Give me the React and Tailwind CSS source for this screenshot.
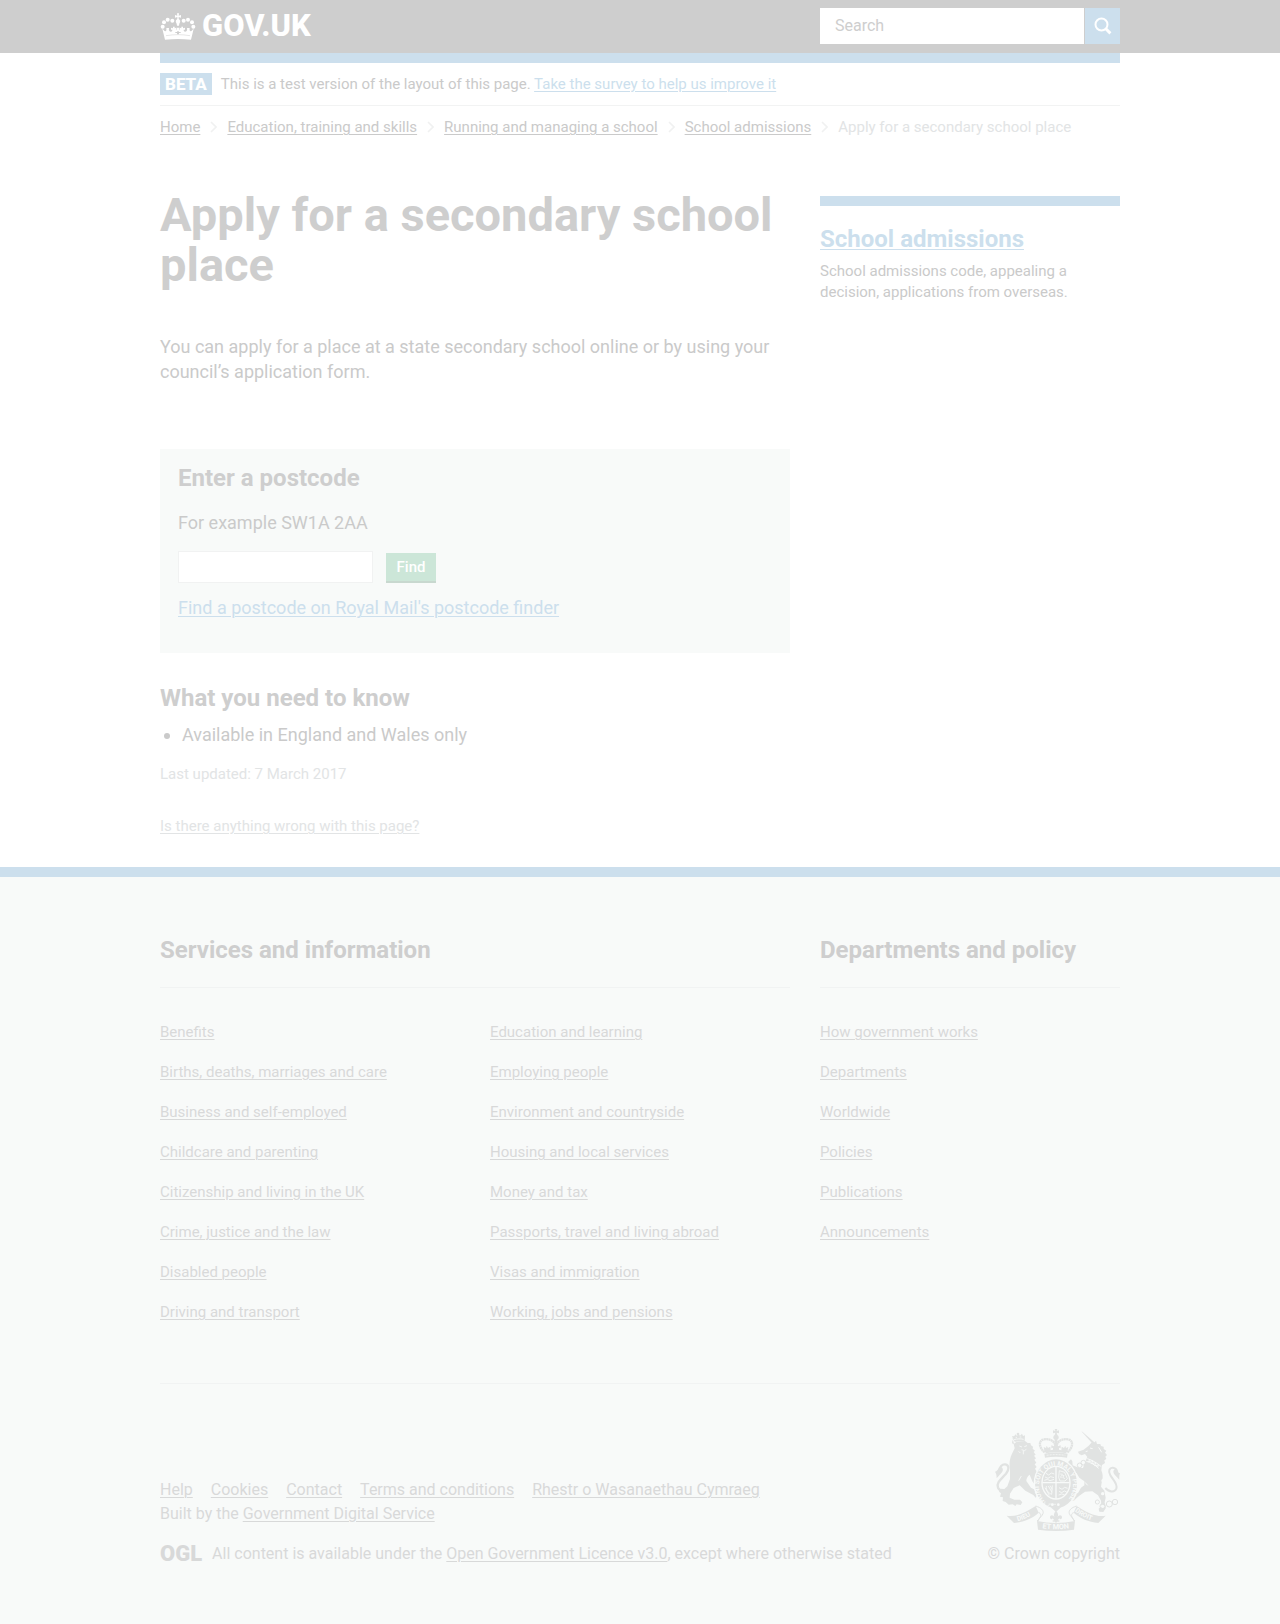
const breadcrumbs = [
  "Home",
  "Education, training and skills",
  "Running and managing a school",
  "School admissions",
];

const services = [
  "Benefits",
  "Births, deaths, marriages and care",
  "Business and self-employed",
  "Childcare and parenting",
  "Citizenship and living in the UK",
  "Crime, justice and the law",
  "Disabled people",
  "Driving and transport",
];

const moreServices = [
  "Education and learning",
  "Employing people",
  "Environment and countryside",
  "Housing and local services",
  "Money and tax",
  "Passports, travel and living abroad",
  "Visas and immigration",
  "Working, jobs and pensions",
];

const departments = [
  "How government works",
  "Departments",
  "Worldwide",
  "Policies",
  "Publications",
  "Announcements",
];

const meta = ["Help", "Cookies", "Contact", "Terms and conditions", "Rhestr o Wasanaethau Cymraeg"];

function Link({ className = "", children }) {
  return (
    <a href="#" className={`underline decoration-1 underline-offset-2 ${className}`}>
      {children}
    </a>
  );
}

function Crown() {
  const pearls = [
    [38, 77, 6], [42, 64, 6], [53, 56, 6], [67, 59, 6],
    [101, 59, 6], [114, 56, 6], [126, 64, 6], [130, 77, 6],
  ];
  return (
    <svg viewBox="30 36 108 81" className="h-[27px] w-9" fill="currentColor" aria-hidden="true">
      {pearls.map(([x, y, r]) => (
        <circle key={`${x}-${y}`} cx={x} cy={y} r={r} />
      ))}
      <path d="M81 37h6l-1 7 7-2v8l-7-2v6c6 3 6 9 2 14l-1 6h-6l-1-6c-4-5-4-11 2-14v-6l-7 2v-8l7 2z" />
      <path d="M37 83c4 2 5 7 9 8 3 0 4-5 3-10h8c-1 6 0 11 5 11 4 0 5-3 5-6h-4v-6l6 2v-5h5v5l4-2 1 8c1-2 2-5 0-8h10c-2 3-1 6 0 8l1-8 4 2v-5h5v5l6-2v6h-4c0 3 1 6 5 6 5 0 6-5 5-11h8c-1 5 0 10 3 10 4-1 5-6 9-8l-8 33c-26-3-52-3-78 0z" />
      <path d="M76 93h6v-3h4v3h6v3h-5v4h-6v-4h-5z" fill="#cecece" />
      <path d="M48 104c24-4 48-4 72 0" fill="none" stroke="#cecece" strokeWidth="1.5" />
    </svg>
  );
}

function SearchIcon() {
  return (
    <svg viewBox="0 0 18 18" className="size-[18px]" fill="none" stroke="currentColor" aria-hidden="true">
      <circle cx="7.5" cy="7.5" r="6" strokeWidth="2" />
      <path d="M11.8 11.8l4.6 4.6" strokeWidth="3" />
    </svg>
  );
}

function Chevron() {
  return (
    <svg viewBox="0 0 7 12" className="mx-2.5 mt-1 h-3 w-[7px]" fill="none" stroke="#f0f1f1" strokeWidth="1.6" aria-hidden="true">
      <path d="M1 1l5 5-5 5" />
    </svg>
  );
}

function Lion() {
  return (
    <>
      <path d="M134 95l-8-17 6 1 5-6 4 5 4-7 5 6 6-6 3 7 6-2-1 17z" />
      <circle cx="144" cy="72" r="4" />
      <path d="M132 101l7-5 16-2 10-1 8 6 8 0 2 7 6 4-1 6 7 6-4 4 6 8-5 3 6 8-5 4 6 9-5 5 6 8-5 5c4 6 7 12 8 19l12-2 0 10-8 6-10-4 3 16-7 2-6-9-8-20c-7 5-10 12-10 19l14 20 18 9 9-2 8 12-7 9-10-3-4 5-7-8-24-13-17-16-18 8-11 17-1 12 14 6 17 0 7 8-5 8-12-2-4 5-8-5-12 1-9-8-9-3 1-11-9-2 3-10-6-5 5-9 11 1 9-8 8-22 0-30c-3-15-1-32 6-46l8-16-3-13-5-2 1-8 4-4-4-6z" />
      <path
        d="M120 231c-12 13-30 15-36 2-6-15 10-26 24-42 10-12 10-26-2-28-10-1-17 8-19 20"
        fill="none"
        stroke="#e1e3e2"
        strokeWidth="7"
      />
      <path d="M92 171c8 2 8 10 4 16l-16 18c0-8-1-14-5-20 5 0 9-8 17-14z" />
      <g fill="none" stroke="#f8faf9" strokeWidth="2.5">
        <path d="M148 108l8 3M163 110l8-3M155 119l8 3 6-4M160 123v10M151 129l-5-5" />
        <path d="M132 89c10-3 19-3 29-1M137 82h4M149 81h5" />
        <path d="M108 290l6 8M102 300l6 5M188 274l7 4M133 303l5 5" />
        <path d="M154 198l-8 14" />
      </g>
    </>
  );
}

function Unicorn() {
  return (
    <>
      <path d="M334 64l4 2 42 37-6 5z" />
      <path d="M341 119l15-12 11-12 5 4 6-7 3 10 10 0 2 6 8 2 0 7 8 5-4 6 6 7-5 5 3 7-6 4 2 8-9 6-2 16c4 10 6 20 2 31l-3 18 10 12 4 21-3 14 3 18-7 11-12-1-2-9 8-7-1-17-9-16-17-12-22 1-17 12-8 7-9 9-15-1-3-6 12-10 19-7 9-16 10-7 0-12-15-11-8-13-13-5-11-13-1-17 8-7 4 6 1 12 18 7 13 1 8-22 5-11-7-9-10 4-8-4-3-7z" />
      <path
        d="M406 234c11 13 28 14 33 2 5-14-9-25-18-40-8-13-2-24 8-23 8 1 13 8 13 18"
        fill="none"
        stroke="#e1e3e2"
        strokeWidth="6"
      />
      <path d="M434 178c-6 4-5 11 0 16l14 15c0-8-1-13 2-19-6-1-8-7-16-12z" />
      <g fill="none" stroke="#f8faf9" strokeWidth="3">
        <path d="M352 146c14 4 28 12 42 24M349 154c12 3 25 10 37 21" />
        <path d="M360 148l-5 7 13-3-3 9 12-3-3 9 11-2-2 7" />
        <path d="M360 114l8 2M347 125l6-2M386 112l9 15M345 217l8 9" />
      </g>
      <g fill="none" stroke="#e1e3e2" strokeWidth="3">
        <circle cx="340" cy="158" r="7" />
        <circle cx="329" cy="166" r="7" />
        <circle cx="336" cy="187" r="7" />
        <circle cx="382" cy="276" r="6" />
        <circle cx="398" cy="289" r="8" />
        <circle cx="418" cy="282" r="9" />
        <circle cx="435" cy="276" r="8" />
      </g>
      <g fill="#f8faf9">
        <circle cx="399" cy="212" r="5" />
        <circle cx="398" cy="251" r="5" />
        <circle cx="382" cy="276" r="4" />
        <circle cx="398" cy="289" r="5" />
      </g>
    </>
  );
}

function RoyalArms() {
  return (
    <svg viewBox="75 57 375 306" className="h-[102px] w-[125px]" fill="#e1e3e2" role="img" aria-label="Royal coat of arms">
      <defs>
        <path id="garter" d="M224 272A51 60 0 1 1 292 272" />
        <path id="ribbon-left" d="M143 334Q172 326 198 306" />
        <path id="ribbon-mid" d="M217 355Q258 361 303 354" />
        <path id="ribbon-right" d="M314 304Q344 327 378 335" />
      </defs>
      <Lion />
      <Unicorn />

      {/* ribbon */}
      <path d="M110 317c25 6 57-9 87-29l9 20c-19 17-44 28-74 31z" />
      <path d="M407 317c-25 6-57-9-87-29l-9 20c19 17 44 28 74 31z" />
      <path d="M201 333c38 8 76 8 114 0l-3 26c-36 5-72 5-108 0z" />
      <g fill="none" stroke="#e1e3e2" strokeWidth="3">
        <path d="M197 288c16 5 25 13 22 23-3 8-12 13-15 22" />
        <path d="M320 288c-16 5-25 13-22 23 3 8 12 13 14 22" />
        <path d="M206 308c9 2 9 13-5 25M311 308c-9 2-9 13 4 25" />
      </g>

      {/* garter and shield */}
      <ellipse cx="258" cy="221" rx="67" ry="77" fill="#f8faf9" />
      <ellipse cx="258" cy="221" rx="63" ry="73" />
      <ellipse cx="258" cy="218" rx="44" ry="51" fill="#f8faf9" />
      <ellipse cx="258" cy="218" rx="40" ry="47" />
      <path d="M258 170v96M217 218h82" stroke="#f8faf9" strokeWidth="4" />
      <g fill="none" stroke="#f8faf9" strokeWidth="2.5">
        <path d="M228 190l8 5 8-6 9 3M225 201l9 4 8-5 10 3M223 211l9-3 8 4 12-4" />
        <path d="M267 233l9 5 8-6 9 3M267 244l8 4 8-5 7 3M266 255l9-3 8 2" />
        <path d="M268 182l16 5 8 19-7 7h-15l-4-11zM273 204c-2-8 4-10 9-7l-4 5 7 4M271 192l7 1" />
        <path d="M229 228c-1 12 4 20 16 25M247 226l-2 27M235 228l11 19M240 227l7 11M225 233l13 23" />
      </g>
      <path d="M225 274l-3 20 17-10M258 283l-22-1" fill="none" stroke="#f8faf9" strokeWidth="2" />
      <path d="M242 292h31l-15 14z" />
      <g fill="#f8faf9" fontFamily="Roboto, sans-serif" fontWeight="700">
        <text fontSize="20">
          <textPath href="#garter">HONI SOIT QUI MAL Y PENSE</textPath>
        </text>
        <text fontSize="20">
          <textPath href="#ribbon-left">DIEU</textPath>
        </text>
        <text fontSize="22">
          <textPath href="#ribbon-mid">ET MON</textPath>
        </text>
        <text fontSize="20">
          <textPath href="#ribbon-right">DROIT</textPath>
        </text>
      </g>
      <g fill="#f8faf9">
        <circle cx="247" cy="284" r="4" />
        <circle cx="265" cy="284" r="4" />
      </g>

      {/* fleur-de-lis */}
      <path d="M258 302c7 7 8 14 4 20 4-8 14-8 14 0 0 6-6 8-8 3l-5 6h5v4h-7l-3 5-3-5h-7v-4h5l-5-6c-2 5-8 3-8-3 0-8 10-8 14 0-4-6-3-13 4-20z" />

      {/* crown */}
      <path d="M254 57h8l-2 6 7-2v9l-7-2 2 7h-8l2-7-7 2v-9l7 2z" />
      <circle cx="258" cy="82" r="8" />
      <g fill="none" stroke="#e1e3e2" strokeWidth="7" strokeDasharray="6 1">
        <path d="M224 127c-18-14-18-35-5-38 17-5 32 3 36 14" />
        <path d="M292 127c18-14 18-35 5-38-17-5-32 3-36 14" />
      </g>
      <path d="M254 88h8v19h-8z" />
      <path d="M223 122l-2-11 7 3 2-7 4 7 7-4 1 11 7-2v-6l-5 2v-9l8 3 1-8h10l1 8 8-3v9l-5-2v6l7 2 1-11 7 4 4-7 2 7 7-3-2 11-5 8c-19-4-41-4-60 0z" />
      <path d="M223 131c23-5 47-5 70 0l-2 12c-22-4-44-4-66 0z" />
      <path d="M230 136c19-3 37-3 56 0" fill="none" stroke="#f8faf9" strokeWidth="2" strokeDasharray="6 3" />
    </svg>
  );
}

function FooterList({ items }) {
  return (
    <ul className="flex flex-col gap-5">
      {items.map((item) => (
        <li key={item}>
          <Link>{item}</Link>
        </li>
      ))}
    </ul>
  );
}

function FooterHeading({ children }) {
  return (
    <h2 className="mb-[34px] border-b border-[#f1f3f3] pb-[22px] text-2xl leading-[30px] font-bold text-[#cecece]">
      {children}
    </h2>
  );
}

export default function App() {
  return (
    <div className="bg-white font-['Roboto',sans-serif] text-[15px] leading-5 text-[#cacaca]">
      <header className="bg-[#cecece] px-4">
        <div className="mx-auto grid max-w-[960px] grid-cols-[minmax(0,21fr)_minmax(0,10fr)] items-center gap-[30px] pt-2 pb-[9px]">
          <a href="#" className="flex items-center gap-1.5 text-white">
            <Crown />
            <span className="text-[31px] leading-9 font-extrabold">GOV.UK</span>
          </a>
          <form className="flex h-9 gap-px" onSubmit={(event) => event.preventDefault()}>
            <input
              type="search"
              aria-label="Search"
              placeholder="Search"
              className="min-w-0 flex-1 bg-white px-[15px] text-base outline-none placeholder:text-[#cecece]"
            />
            <button type="submit" aria-label="Search GOV.UK" className="flex w-[35px] items-center justify-center bg-[#ccdfed] text-white">
              <SearchIcon />
            </button>
          </form>
        </div>
      </header>

      <div className="px-4">
        <div className="mx-auto max-w-[960px]">
          <div className="flex items-center gap-[9px] border-t-10 border-b border-t-[#ccdfed] border-b-[#f2f3f3] py-2.5">
            <strong className="bg-[#ccdfed] px-[5px] text-[17px] leading-[22px] font-extrabold text-white">BETA</strong>
            <p>
              This is a test version of the layout of this page.{" "}
              <Link className="text-[#ccdfed]">Take the survey to help us improve it</Link>
            </p>
          </div>

          <nav aria-label="Breadcrumb" className="mt-[11px]">
            <ol className="flex flex-wrap">
              {breadcrumbs.map((crumb) => (
                <li key={crumb} className="flex">
                  <Link>{crumb}</Link>
                  <Chevron />
                </li>
              ))}
              <li className="text-[#e2e4e5]">Apply for a secondary school place</li>
            </ol>
          </nav>

          <div className="mt-[53px] grid grid-cols-[minmax(0,21fr)_minmax(0,10fr)] gap-[30px] pb-[31px]">
            <main>
              <h1 className="text-[47px] leading-[50px] font-bold text-[#cecece]">Apply for a secondary school place</h1>
              <p className="mt-11 text-lg leading-[25px]">
                You can apply for a place at a state secondary school online or by using your council’s application form.
              </p>

              <form
                className="mt-[65px] bg-[#f8faf9] px-[18px] pt-3.5 pb-[33px] text-lg leading-[25px]"
                onSubmit={(event) => event.preventDefault()}
              >
                <label htmlFor="postcode" className="block text-2xl leading-[30px] font-bold text-[#cecece]">
                  Enter a postcode
                </label>
                <p id="postcode-hint" className="mt-[17px]">For example SW1A 2AA</p>
                <div className="mt-4 flex items-end gap-[13px]">
                  <input
                    id="postcode"
                    type="text"
                    aria-describedby="postcode-hint"
                    className="h-8 w-[195px] border border-[#f1f2f2] bg-white px-1"
                  />
                  <button
                    type="submit"
                    className="h-[30px] w-[50px] border-b-2 border-[#c8d8cf] bg-[#cce6d8] text-[15px] leading-5 font-medium text-white"
                  >
                    Find
                  </button>
                </div>
                <p className="mt-3">
                  <Link className="text-[#ccdfed]">Find a postcode on Royal Mail's postcode finder</Link>
                </p>
              </form>

              <h2 className="mt-[30px] text-2xl leading-[30px] font-bold text-[#cecece]">What you need to know</h2>
              <ul className="mt-[9px] list-disc pl-[22px] text-lg leading-[25px]">
                <li>Available in England and Wales only</li>
              </ul>
              <p className="mt-[17px] text-[#e2e4e5]">Last updated: 7 March 2017</p>
              <p className="mt-8 text-[#e2e4e5]">
                <Link>Is there anything wrong with this page?</Link>
              </p>
            </main>

            <aside className="mt-1.5 self-start border-t-10 border-[#ccdfed] pt-[18px]">
              <h2 className="text-2xl leading-[30px] font-bold text-[#ccdfed]">
                <Link>School admissions</Link>
              </h2>
              <p className="mt-[7px] max-w-[270px] leading-[21px]">
                School admissions code, appealing a decision, applications from overseas.
              </p>
            </aside>
          </div>
        </div>
      </div>

      <footer className="border-t-10 border-[#ccdfed] bg-[#f8faf9] px-4 pt-[58px] pb-[60px] text-[#d8d9d9]">
        <div className="mx-auto max-w-[960px]">
          <div className="grid grid-cols-[minmax(0,21fr)_minmax(0,10fr)] gap-[30px]">
            <section>
              <FooterHeading>Services and information</FooterHeading>
              <div className="grid grid-cols-2 gap-[30px]">
                <FooterList items={services} />
                <FooterList items={moreServices} />
              </div>
            </section>
            <section>
              <FooterHeading>Departments and policy</FooterHeading>
              <FooterList items={departments} />
            </section>
          </div>

          <div className="mt-[61px] flex items-end justify-between border-t border-[#f1f3f3] pt-[45px] text-base leading-5">
            <div>
              <ul className="flex flex-wrap gap-[18px]">
                {meta.map((item) => (
                  <li key={item}>
                    <Link>{item}</Link>
                  </li>
                ))}
              </ul>
              <p className="mt-1">
                Built by the <Link>Government Digital Service</Link>
              </p>
              <div className="mt-5 flex items-center gap-2.5">
                <span className="text-[22px] leading-5 font-black">OGL</span>
                <p>
                  All content is available under the <Link>Open Government Licence v3.0</Link>, except where otherwise stated
                </p>
              </div>
            </div>
            <a href="#" className="flex flex-col items-end gap-[13px]">
              <RoyalArms />
              <span>© Crown copyright</span>
            </a>
          </div>
        </div>
      </footer>
    </div>
  );
}
